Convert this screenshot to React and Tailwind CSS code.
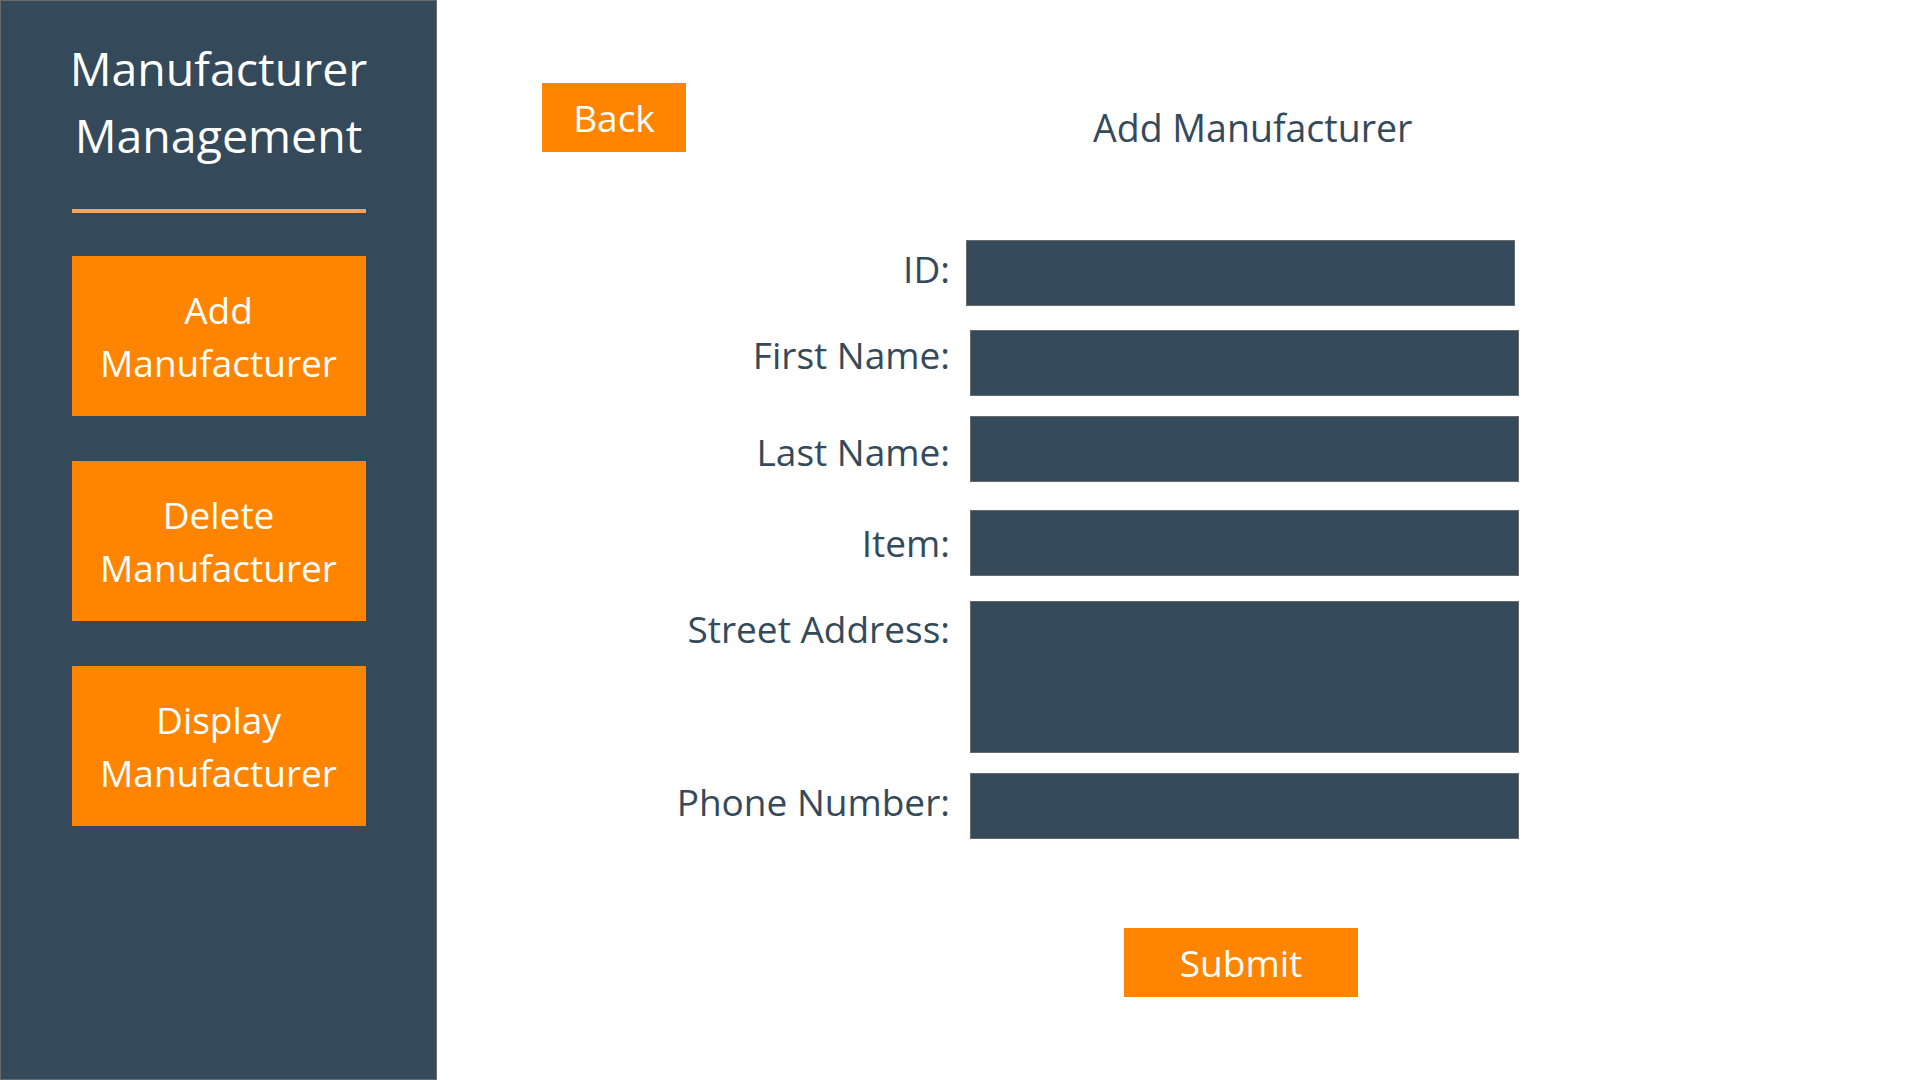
import React from "react";

const font = { fontFamily: '"Open Sans", "Noto Sans", sans-serif' };

function SideButton({ top, bottom }) {
  return (
    <button className="w-[294px] h-[160px] bg-[#ff8500] text-white text-[37px] leading-[53px] flex flex-col items-center justify-center">
      <span>{top}</span>
      <span>{bottom}</span>
    </button>
  );
}

function Field({ label, className = "", labelClass = "", gap = "ml-[20px]", tall = false }) {
  return (
    <div className={`flex ${tall ? "items-start h-[152px]" : "items-center h-[66px]"} ${className}`}>
      <div className={`w-[408px] shrink-0 text-right text-[37px] text-[#344a5a] leading-[40px] ${labelClass}`}>{label}</div>
      <div
        className={`${gap} w-[549px] shrink-0 ${tall ? "h-[152px]" : "h-[66px]"} bg-[#34495a] border border-[#666a6e]`}
      />
    </div>
  );
}

export default function App() {
  return (
    <div className="flex w-full h-[1080px] bg-white" style={font}>
      <aside className="w-[437px] h-[1080px] shrink-0 bg-[#34495a] border border-[#6a6a6a] flex flex-col items-center pt-[34px]">
        <div className="w-[300px] text-center text-white text-[46.5px] leading-[67px]">
          <div>Manufacturer</div>
          <div>Management</div>
        </div>
        <div className="w-[294px] h-[4px] bg-[#f7a35c] mt-[40px]" />
        <div className="flex flex-col gap-[45px] mt-[43px]">
          <SideButton top="Add" bottom="Manufacturer" />
          <SideButton top="Delete" bottom="Manufacturer" />
          <SideButton top="Display" bottom="Manufacturer" />
        </div>
      </aside>

      <main className="flex-1 pt-[83px] pl-[105px]">
        <div className="flex items-start">
          <button className="w-[144px] h-[69px] bg-[#ff8500] text-white text-[37px] flex items-center justify-center">
            Back
          </button>
          <h1 className="ml-[407px] mt-[26px] text-[37.5px] leading-none text-[#344a5a] font-normal">
            Add Manufacturer
          </h1>
        </div>

        <div className="flex flex-col mt-[88px]">
          <Field label="ID:" gap="ml-[16px]" labelClass="pb-[8px]" />
          <Field label="First Name:" className="mt-[24px]" labelClass="pb-[16px]" />
          <Field label="Last Name:" className="mt-[20px]" labelClass="pt-[6px]" />
          <Field label="Item:" className="mt-[28px]" />
          <Field label="Street Address:" className="mt-[25px]" tall labelClass="pt-[8px]" />
          <Field label="Phone Number:" className="mt-[20px]" labelClass="pb-[8px]" />
        </div>

        <button className="mt-[89px] ml-[582px] w-[234px] h-[69px] bg-[#ff8500] text-white text-[37px] flex items-center justify-center">
          Submit
        </button>
      </main>
    </div>
  );
}
